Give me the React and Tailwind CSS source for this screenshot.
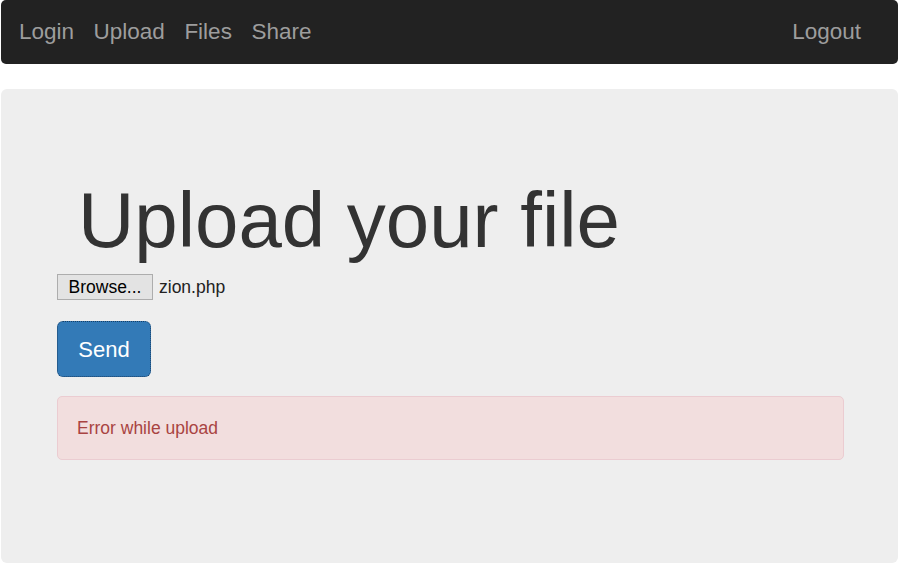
export default function App() {
  return (
    <div className="min-h-[570px] bg-white" style={{ fontFamily: '"Liberation Sans", Arial, sans-serif' }}>
      <nav className="mx-[1px] w-[897px] h-[64px] bg-[#222222] rounded-[5px] flex items-center justify-between pl-[18px] pr-[37px] text-[22.5px] text-[#9d9d9d]">
        <div className="flex gap-[19.5px]">
          <span>Login</span>
          <span>Upload</span>
          <span>Files</span>
          <span>Share</span>
        </div>
        <span>Logout</span>
      </nav>
      <div className="mt-[25px] ml-[1px] w-[897px] h-[474px] bg-[#eeeeee] rounded-[6px] pl-[56px] pr-[55px] pt-[87px]">
        <h1 className="ml-[21px] text-[78px] leading-[88px] text-[#333333] font-normal">Upload your file</h1>
        <div className="mt-[10px] flex items-center h-[26px]">
          <span className="h-[26px] w-[96px] flex items-center justify-center bg-[#e3e3e3] border border-[#adadad] text-[17.5px] text-black">Browse...</span>
          <span className="ml-[6px] text-[17.5px] text-[#222]">zion.php</span>
        </div>
        <div className="mt-[21px]">
          <span className="inline-flex items-center justify-center w-[94px] h-[56px] bg-[#337ab7] rounded-[6px] border border-dotted border-[#173f66] text-white text-[22px]">Send</span>
        </div>
        <div className="mt-[19px] w-[787px] h-[64px] bg-[#f2dede] border border-[#ebccd1] rounded-[5px] flex items-center pl-[19px] text-[17.5px] text-[#a94442]">
          Error while upload
        </div>
      </div>
    </div>
  );
}
